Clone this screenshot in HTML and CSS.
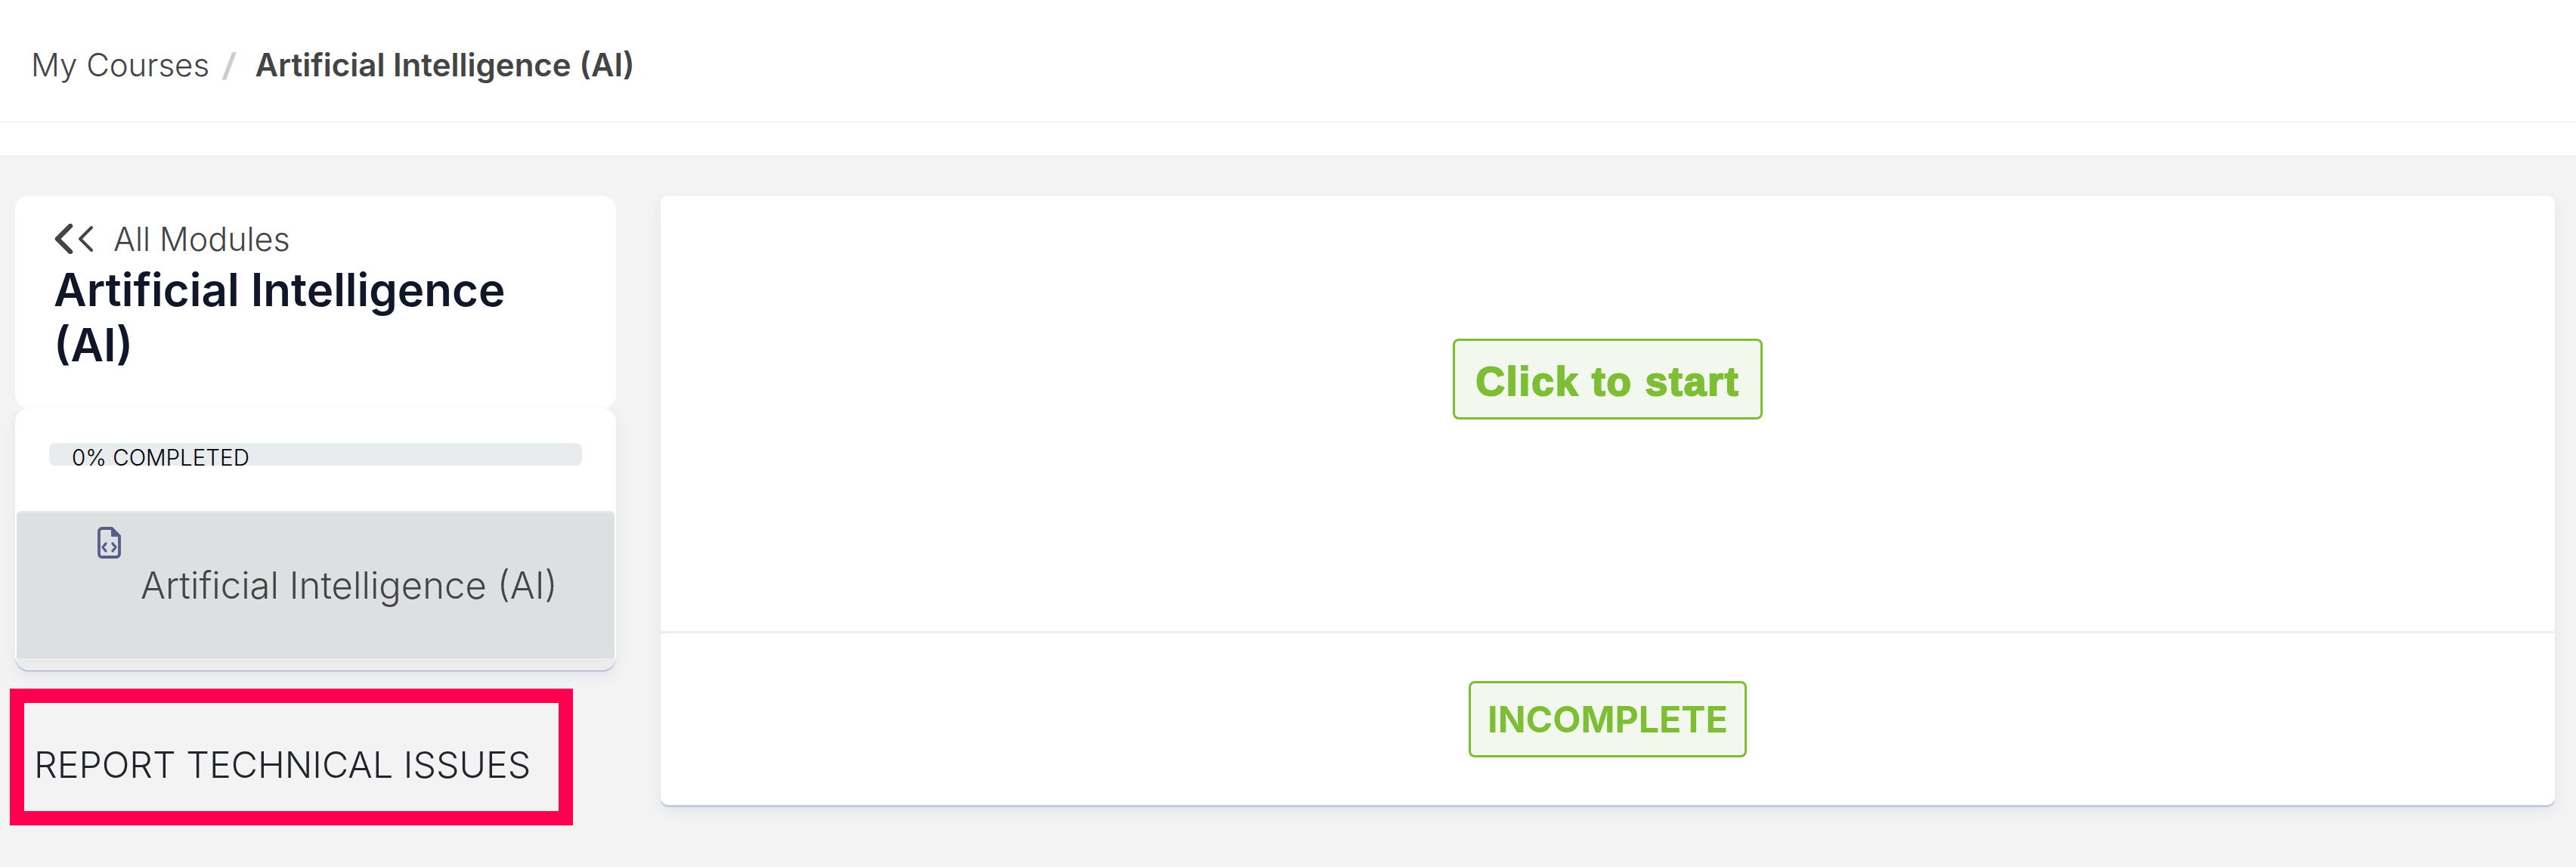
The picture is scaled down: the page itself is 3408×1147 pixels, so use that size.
FILE: index.html
```html
<!DOCTYPE html>
<html lang="en">
<head>
<meta charset="utf-8">
<title>Artificial Intelligence (AI)</title>
<link rel="stylesheet" href="styles.css">
</head>
<body>
<header class="topbar">
  <nav class="crumbs">
    <a href="#" class="crumb">My Courses</a>
    <span class="crumb-sep">/</span>
    <span class="crumb-current">Artificial Intelligence (AI)</span>
  </nav>
</header>

<div class="layout">
  <aside class="sidebar">
    <section class="card module-head">
      <a href="#" class="back-link">
        <svg class="back-icon" width="52" height="40" viewBox="0 0 52 40" fill="none" stroke="#444" stroke-linecap="round" stroke-linejoin="round">
          <path d="M21 3 4 20l17 17" stroke-width="6.5"/>
          <path d="M49 5 34 20l15 15" stroke-width="4"/>
        </svg>
        <span>All Modules</span>
      </a>
      <h1 class="module-title">Artificial Intelligence (AI)</h1>
    </section>

    <section class="card module-body">
      <div class="progress"><span class="progress-label">0% COMPLETED</span></div>
      <a href="#" class="lesson">
        <svg class="lesson-icon" width="31" height="42" viewBox="0 0 31 42" fill="none" stroke="#565d8c" stroke-linejoin="round" stroke-linecap="round">
          <path d="M7 2h12l10 10v24a4 4 0 0 1-4 4H6a4 4 0 0 1-4-4V6a4 4 0 0 1 4-4z" stroke-width="3.8"/>
          <path d="M19 3v9h9z" fill="#565d8c" stroke-width="2"/>
          <path d="M11 22l-4 5 4 5M20 22l4 5-4 5" stroke-width="3.4"/>
        </svg>
        <span class="lesson-title">Artificial Intelligence (AI)</span>
      </a>
      <div class="lesson-foot"></div>
    </section>

    <a href="#" class="report">REPORT TECHNICAL ISSUES</a>
  </aside>

  <main class="card content">
    <div class="content-top">
      <button class="btn btn-start">Click to start</button>
    </div>
    <div class="content-bottom">
      <button class="btn btn-status">INCOMPLETE</button>
    </div>
  </main>
</div>
</body>
</html>
```

FILE: styles.css
```css
*{box-sizing:border-box}
html,body{height:100%}
body{margin:0;background:#f3f3f3;font-family:Inter,"Liberation Sans",sans-serif;color:#444;overflow:hidden}
a{color:inherit;text-decoration:none}

/* top bar */
.topbar{height:205px;background:#fff}
.crumbs{height:162px;display:flex;align-items:center;padding:12px 0 0 41px;border-bottom:2px solid #f3f3f5;font-size:42px;font-weight:340;line-height:1}
.crumb-sep{margin:0 26px 0 18px;color:#ccc;font-weight:700;transform:skewX(-6deg)}
.crumb-current{font-weight:600}

.layout{display:flex;align-items:flex-start;padding:54px 28px 0 13px;gap:59px}
.sidebar{width:802px;flex:none}

.card{background:#fff;border-radius:18px}

/* module header */
.module-head{margin-left:7px;width:795px;height:281px;padding:33px 52px 0}
.back-link{display:flex;align-items:center;font-size:43px;font-weight:340;line-height:48px}
.back-icon{margin-right:26px;flex:none}
.module-title{margin:7px 0 0 -1px;font-size:60px;line-height:73px;font-weight:600;color:#101729}

/* progress + lesson */
.module-body{margin-left:7px;width:795px;height:346px;padding:46px 2px 0;box-shadow:0 3px 0 #c5cbdd,0 8px 16px rgba(197,203,221,.35);overflow:hidden}
.progress{height:30px;margin:0 43px;background:#e9ecef;border-radius:8px;padding-left:30px}
.progress-label{display:block;font-size:29.5px;line-height:38px;font-weight:340;color:#000}
.lesson{display:block;margin-top:60px;height:195px;background:#dedfe0;border-top:3px solid #e6e7e8;border-radius:6px 6px 0 0;padding:18px 0 0 107px}
.lesson-icon{display:block}
.lesson-title{display:block;margin:6px 0 0 57px;font-size:49px;line-height:60px;font-weight:340;white-space:nowrap}
.lesson-foot{height:14px;background:#ececec}

/* report box */
.report{display:block;margin-top:25px;width:745px;height:181px;border:19px solid #ff0050;padding:52px 0 0 13px;font-size:48.3px;line-height:60px;font-weight:340;color:#22252b;white-space:nowrap}

/* main panel */
.content{flex:1;height:806px;display:flex;flex-direction:column;box-shadow:0 3px 0 #c5cbdd,0 8px 16px rgba(197,203,221,.35);border-radius:10px}
.content-top{height:579px;padding-top:189px;display:flex;justify-content:center;align-items:flex-start;border-bottom:3px solid #eee}
.content-bottom{flex:1;padding-top:63px;display:flex;justify-content:center;align-items:flex-start}
.btn{border:3px solid #7dbe35;border-radius:8px;background:#f3f8ee;color:#7dbe35;padding:0;font-family:inherit}
.btn-start{width:410px;height:107px;padding-top:5px;font-family:"Liberation Sans",sans-serif;font-size:53px;font-weight:700;letter-spacing:2px;-webkit-text-stroke:2.2px #7dbe35}
.btn-status{width:368px;height:101px;font-size:48.3px;font-weight:700}
```
